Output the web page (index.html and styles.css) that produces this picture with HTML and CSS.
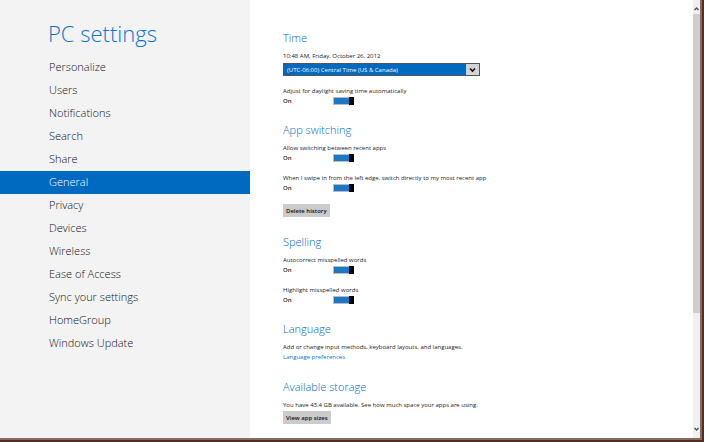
FILE: index.html
```html
<!DOCTYPE html>
<html lang="en">
  <head>
    <meta charset="utf-8">
    <title>PC settings</title>
    <link rel="stylesheet" href="styles.css">
  </head>
  <body>
    <div class="app">
      <aside class="sidebar">
        <h1 class="title">PC settings</h1>
        <nav class="menu">
          <a class="menu-link" href="#personalize">Personalize</a>
          <a class="menu-link" href="#users">Users</a>
          <a class="menu-link" href="#notifications">Notifications</a>
          <a class="menu-link" href="#search">Search</a>
          <a class="menu-link" href="#share">Share</a>
          <a class="menu-link active" href="#general" aria-current="page">General</a>
          <a class="menu-link" href="#privacy">Privacy</a>
          <a class="menu-link" href="#devices">Devices</a>
          <a class="menu-link" href="#wireless">Wireless</a>
          <a class="menu-link" href="#ease">Ease of Access</a>
          <a class="menu-link" href="#sync">Sync your settings</a>
          <a class="menu-link" href="#homegroup">HomeGroup</a>
          <a class="menu-link" href="#update">Windows Update</a>
        </nav>
      </aside>

      <main class="content">
        <section class="group">
          <h2 class="heading">Time</h2>
          <label class="text" for="timezone">10:48 AM, Friday, October 26, 2012</label>
          <div class="dropdown">
            <select class="dropdown-select" id="timezone">
              <option>(UTC-06:00) Central Time (US &amp; Canada)</option>
            </select>
            <svg class="dropdown-arrow" viewBox="0 0 13 11" aria-hidden="true">
              <path d="M4 4.500l2.500 2.500L9 4.500" fill="none" stroke="#111" stroke-width="1.600"/>
            </svg>
          </div>
          <div class="setting">
            <label class="text" for="daylight">Adjust for daylight saving time automatically</label>
            <div class="setting-row">
              <span class="state">On</span>
              <input class="toggle" id="daylight" type="checkbox" role="switch" checked>
            </div>
          </div>
        </section>

        <section class="group">
          <h2 class="heading">App switching</h2>
          <div class="setting">
            <label class="text" for="switching">Allow switching between recent apps</label>
            <div class="setting-row">
              <span class="state">On</span>
              <input class="toggle" id="switching" type="checkbox" role="switch" checked>
            </div>
          </div>
          <div class="setting">
            <label class="text" for="swipe">When I swipe in from the left edge, switch directly to my most recent app</label>
            <div class="setting-row">
              <span class="state">On</span>
              <input class="toggle" id="swipe" type="checkbox" role="switch" checked>
            </div>
          </div>
          <button class="button spaced" type="button">Delete history</button>
        </section>

        <section class="group">
          <h2 class="heading">Spelling</h2>
          <div class="setting">
            <label class="text" for="autocorrect">Autocorrect misspelled words</label>
            <div class="setting-row">
              <span class="state">On</span>
              <input class="toggle" id="autocorrect" type="checkbox" role="switch" checked>
            </div>
          </div>
          <div class="setting">
            <label class="text" for="highlight">Highlight misspelled words</label>
            <div class="setting-row">
              <span class="state">On</span>
              <input class="toggle" id="highlight" type="checkbox" role="switch" checked>
            </div>
          </div>
        </section>

        <section class="group">
          <h2 class="heading">Language</h2>
          <p class="text">Add or change input methods, keyboard layouts, and languages.</p>
          <a class="text link" href="#language">Language preferences</a>
        </section>

        <section class="group">
          <h2 class="heading">Available storage</h2>
          <p class="text">You have 43.4 GB available. See how much space your apps are using.</p>
          <button class="button" type="button">View app sizes</button>
        </section>
      </main>

      <div class="scrollbar" aria-hidden="true">
        <svg class="scroll-arrow" viewBox="0 0 7 14"><path d="M1.500 10l2-2 2 2" fill="none" stroke="#505050" stroke-width="1.400"/></svg>
        <div class="scroll-track"><div class="scroll-thumb"></div></div>
        <svg class="scroll-arrow" viewBox="0 0 7 14"><path d="M1.500 4l2 2 2-2" fill="none" stroke="#505050" stroke-width="1.400"/></svg>
      </div>
    </div>
  </body>
</html>
```
FILE: styles.css
```css
* {
  box-sizing: border-box;
  margin: 0;
  padding: 0;
}

/* the window sits on a brown desktop that shows at the right and bottom */
body {
  display: flex;
  min-height: 100vh;
  padding: 0 2px 2px 0;
  background: #532f22;
  font-family: "Open Sans", "Noto Sans", sans-serif;
  font-size: 6px;
  line-height: 10px;
  color: #222;
}

.app {
  display: flex;
  flex: 1;
  background: #fff;
  border: solid #856b62;
  border-width: 0 2px 2px 0;
}

.sidebar {
  flex: 0 0 250px;
  padding-top: 17px;
  background: #f3f3f3;
}

.title {
  padding-left: 48px;
  margin-bottom: 7px;
  font-size: 22px;
  font-weight: 300;
  line-height: 32px;
  color: #0a74cc;
}

.menu-link {
  display: block;
  padding: 0 0 2px 49px;
  font-size: 11px;
  font-weight: 300;
  line-height: 21px;
  color: #111;
  text-decoration: none;
}

.menu-link.active {
  background: #0069c0;
  color: #fff;
}

.content {
  flex: 1;
  padding: 30px 16px 0 33px;
}

.group {
  margin-bottom: 16px;
}

.group:last-child {
  margin-bottom: 0;
}

.heading {
  margin-bottom: 5px;
  font-size: 11px;
  font-weight: 300;
  line-height: 16px;
  color: #0069c0;
}

.text {
  display: block;
}

.link {
  margin-bottom: 17px;
  color: #0a74cc;
  text-decoration: none;
}

.dropdown {
  position: relative;
  width: 197px;
  max-width: 100%;
  margin: 2px 0 10px;
}

.dropdown-select {
  display: block;
  width: 100%;
  height: 13px;
  padding: 0 16px 0 3px;
  appearance: none;
  border: 1px solid #555;
  border-radius: 0;
  background: #0069c0;
  color: #fff;
  font: inherit;
}

.dropdown-arrow {
  position: absolute;
  top: 1px;
  right: 1px;
  width: 13px;
  height: 11px;
  background: #d4d4d4;
  pointer-events: none;
}

.setting + .setting {
  margin-top: 10px;
}

.setting-row {
  display: flex;
  align-items: center;
  height: 10px;
}

.state {
  width: 50px;
  font-weight: 600;
}

.toggle {
  width: 21px;
  height: 8px;
  padding: 1px;
  appearance: none;
  background:
    linear-gradient(#000, #000) right / 5px 100% no-repeat border-box,
    linear-gradient(#1a78c6, #1a78c6) content-box,
    #b8bcc0;
}

.toggle:not(:checked) {
  background: linear-gradient(#000, #000) left / 5px 100% no-repeat border-box, #a6a6a6;
}

.button {
  display: block;
  height: 13px;
  margin: 1px 0;
  padding: 0 3px;
  border: 0;
  background: #cbcbcb;
  color: #111;
  font: inherit;
  font-weight: 600;
}

.button.spaced {
  margin: 11px 0 17px;
}

.scrollbar {
  display: flex;
  flex: 0 0 7px;
  flex-direction: column;
  background: #f0f0f0;
}

.scroll-arrow {
  display: block;
  width: 7px;
  height: 14px;
}

.scroll-track {
  flex: 1;
}

.scroll-thumb {
  height: 73%;
  background: #cdcdcd;
}
```
